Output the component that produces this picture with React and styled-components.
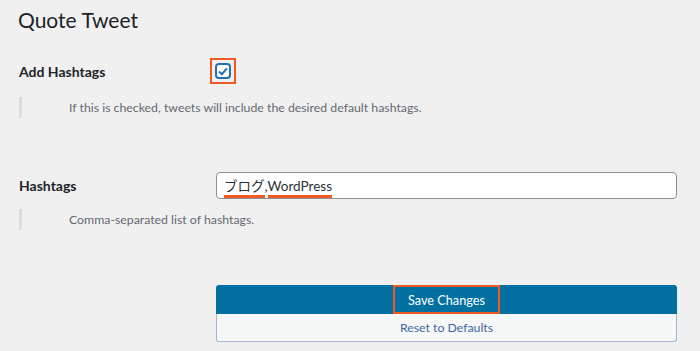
import React from "react";
import styled, { createGlobalStyle } from "styled-components";

const Global = createGlobalStyle`
  html, body {
    margin: 0;
    background: #f0f0f1;
    font-family: Lato, "Open Sans", "Noto Sans CJK JP", sans-serif;
    color: #1d2327;
  }
`;

const Page = styled.div`
  width: 700px;
  height: 351px;
  box-sizing: border-box;
  padding: 0 23px 0 18px;
  overflow: hidden;
`;

const Title = styled.h1`
  margin: 0;
  padding-top: 5px;
  font-size: 21px;
  font-weight: 400;
  line-height: 30px;
`;

const Row = styled.div`
  display: grid;
  grid-template-columns: 198px 1fr;
  align-items: center;
  margin-top: ${(p) => p.$top}px;
  height: ${(p) => p.$height}px;
`;

const Label = styled.div`
  padding-left: 1px;
  font-size: 14px;
  font-weight: 700;
`;

const Desc = styled.div`
  margin: ${(p) => p.$top}px 0 0 1px;
  border-left: 3px solid #dcdcde;
  padding-left: 47px;
  height: 21px;
  display: flex;
  align-items: center;
  font-size: 12.3px;
  color: #646970;
`;

const Mark = styled.div`
  width: 16px;
  height: 16px;
  padding: 3px;
  margin-left: -6px;
  border: 2px solid #f05a22;
`;

const Check = styled.span`
  display: flex;
  width: 16px;
  height: 16px;
  box-sizing: border-box;
  border: 2px solid #2271b1;
  border-radius: 4px;
  background: #fff;
  align-items: center;
  justify-content: center;
`;

const Field = styled.div`
  height: 27px;
  box-sizing: border-box;
  border: 1px solid #8c8f94;
  border-radius: 4px;
  background: #fff;
  display: flex;
  align-items: center;
  padding-left: 7px;
  font-size: 13.5px;
  color: #2c3338;
`;

const Under = styled.span`
  border-bottom: 3px solid #f05a22;
  line-height: 17px;
  margin-top: 4px;
`;

const Buttons = styled.div`
  margin: 55px 0 0 198px;
  display: flex;
  flex-direction: column;
`;

const Primary = styled.div`
  height: 29px;
  background: #0271a1;
  border-radius: 3px 3px 0 0;
  display: flex;
  justify-content: center;
  color: #fff;
  font-size: 12.7px;
`;

const Outline = styled.span`
  display: flex;
  align-items: center;
  padding: 0 13px;
  border: 2px solid #f05a22;
  box-sizing: border-box;
`;

const Secondary = styled.div`
  height: 28px;
  box-sizing: border-box;
  background: #f6f7f7;
  border: 1px solid #a4b5d0;
  border-top: none;
  border-radius: 0 0 3px 3px;
  display: flex;
  align-items: center;
  justify-content: center;
  color: #4267a5;
  font-size: 12.3px;
`;

export default function App() {
  return (
    <Page>
      <Global />
      <Title>Quote Tweet</Title>
      <Row $top={21} $height={30}>
        <Label>Add Hashtags</Label>
        <Mark>
          <Check>
            <svg width="10" height="9" viewBox="0 0 10 9">
              <path d="M1 4.6 L3.8 7.2 L9 1.4" fill="none" stroke="#2271b1" strokeWidth="2" />
            </svg>
          </Check>
        </Mark>
      </Row>
      <Desc $top={11}>If this is checked, tweets will include the desired default hashtags.</Desc>
      <Row $top={54} $height={27}>
        <Label>Hashtags</Label>
        <Field>
          <Under>ブログ</Under>,<Under>WordPress</Under>
        </Field>
      </Row>
      <Desc $top={10}>Comma-separated list of hashtags.</Desc>
      <Buttons>
        <Primary>
          <Outline>Save Changes</Outline>
        </Primary>
        <Secondary>Reset to Defaults</Secondary>
      </Buttons>
    </Page>
  );
}
